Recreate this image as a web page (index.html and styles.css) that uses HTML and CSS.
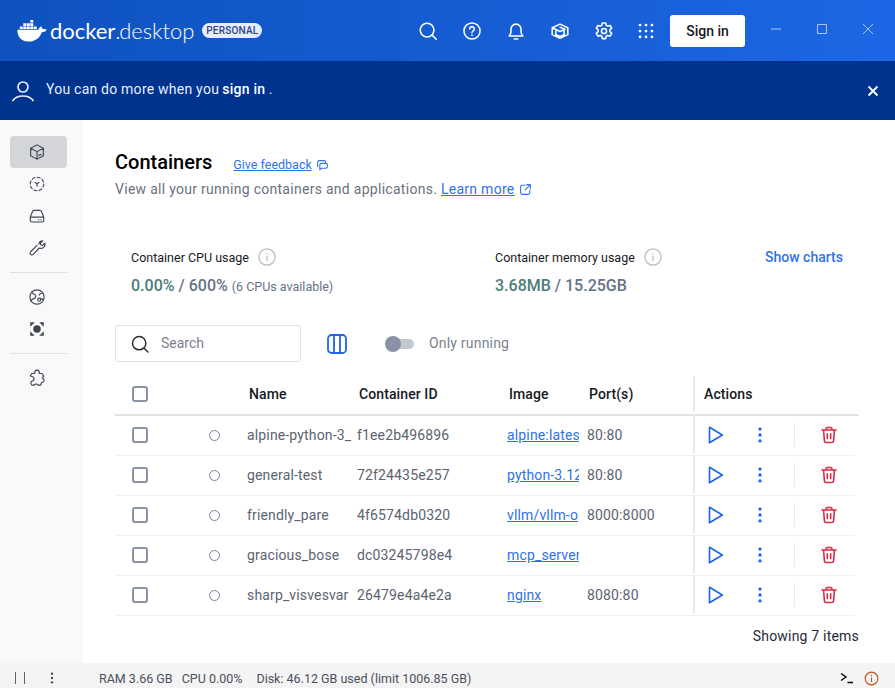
FILE: index.html
```html
<!DOCTYPE html>
<html lang="en">

<head>
    <meta charset="UTF-8">
    <meta name="viewport" content="width=device-width, initial-scale=1.0">
    <title>Docker Desktop</title>
    <link rel="stylesheet" href="styles.css">
</head>

<body>
    <svg class="defs" width="0" height="0">
        <symbol id="play" viewBox="0 0 24 24"><path d="M6 3.500 20 12 6 20.500Z" fill="none" stroke="currentColor" stroke-width="1.800" stroke-linejoin="round"/></symbol>
        <symbol id="dots" viewBox="0 0 24 24"><circle cx="12" cy="5.500" r="1.800" fill="currentColor"/><circle cx="12" cy="12" r="1.800" fill="currentColor"/><circle cx="12" cy="18.500" r="1.800" fill="currentColor"/></symbol>
        <symbol id="trash" viewBox="0 0 24 24"><path d="M3.500 6h17M8.500 6V4.500q0-1.500 1.500-1.500h4q1.500 0 1.500 1.500V6M5.500 6l1 13q.2 2 2 2h7q1.800 0 2-2l1-13M10 10.500v6M14 10.500v6" fill="none" stroke="currentColor" stroke-width="1.900" stroke-linecap="round"/></symbol>
    </svg>

    <header class="topbar">
        <div class="brand">
            <svg class="whale" viewBox="0 0 30 24" width="30" height="24">
                <path d="M.4 11.800h21.200c.3-1.500 1.200-2.800 2.300-3.500 1 .8 1.600 1.900 1.700 3 1.300-.5 2.900-.4 4 .4-1 1.800-3 2.500-4.800 2.500C23 19.800 18.400 23.500 11 23.500 3.800 23.500.4 18.500.4 11.800Z" fill="#fff"/>
                <path d="M2.800 8.600h3v2.500h-3ZM6.300 8.600h3v2.500h-3ZM9.800 8.600h3v2.500h-3ZM13.300 8.600h3v2.500h-3ZM16.800 8.600h3v2.500h-3ZM6.300 5.300h3v2.600h-3ZM9.800 5.300h3v2.600h-3ZM13.300 5.300h3v2.600h-3ZM13.300 2h3v2.600h-3Z" fill="#fff"/>
            </svg>
            <span class="wordmark"><b>docker</b><i>.</i>desktop</span>
            <span class="plan">PERSONAL</span>
        </div>
        <div class="tools">
            <svg viewBox="0 0 24 24" width="22" height="22"><circle cx="11" cy="11" r="7.500"/><path d="m16.500 16.500 4.500 4.500"/></svg>
            <svg viewBox="0 0 24 24" width="22" height="22"><circle cx="12" cy="12" r="8.800"/><path d="M9.500 9.800a2.500 2.500 0 1 1 3.800 2.100c-.9.600-1.300 1-1.300 2"/><path d="M12 16.500v.5"/></svg>
            <svg viewBox="0 0 24 24" width="22" height="22"><path d="M4.500 17.500c1.500-1.500 2-2.700 2-5V10a5.500 5.500 0 0 1 11 0v2.500c0 2.300.5 3.500 2 5ZM10 20.800h4"/></svg>
            <svg viewBox="0 0 24 24" width="22" height="22"><path d="m3.500 8.500 8.500-4 8.500 4v7.500L12 20l-8.500-4ZM3.500 8.500l8.500 4 5.500-2.500-5.500-2M7.500 12v4l4.500 2 4.500-2v-4"/></svg>
            <svg viewBox="0 0 24 24" width="22" height="22"><circle cx="12" cy="12" r="2.800"/><path d="m10.200 3.200h3.600l.6 2.600 1.600.9 2.600-.8 1.800 3.100-2 1.800v1.900l2 1.800-1.800 3.100-2.600-.8-1.600.9-.6 2.600h-3.600l-.6-2.600-1.600-.9-2.600.8-1.800-3.100 2-1.800v-1.900l-2-1.800 1.800-3.100 2.600.8 1.600-.9Z"/></svg>
            <svg class="grid-icon" viewBox="0 0 24 24" width="22" height="22"><circle cx="5.500" cy="5.500" r="1.500"/><circle cx="12" cy="5.500" r="1.500"/><circle cx="18.500" cy="5.500" r="1.500"/><circle cx="5.500" cy="12" r="1.500"/><circle cx="12" cy="12" r="1.500"/><circle cx="18.500" cy="12" r="1.500"/><circle cx="5.500" cy="18.500" r="1.500"/><circle cx="12" cy="18.500" r="1.500"/><circle cx="18.500" cy="18.500" r="1.500"/></svg>
        </div>
        <button class="signin">Sign in</button>
        <div class="window">
            <svg viewBox="0 0 12 12" width="12" height="12"><path d="M1 6h10"/></svg>
            <svg viewBox="0 0 12 12" width="12" height="12"><path d="M1.500 1.500h9v9h-9Z"/></svg>
            <svg viewBox="0 0 12 12" width="12" height="12"><path d="m1 1 10 10M11 1 1 11"/></svg>
        </div>
    </header>

    <div class="banner">
        <svg viewBox="0 0 24 24" width="24" height="24"><circle cx="12" cy="8" r="5"/><path d="M1.500 22c2.500-3.700 6-5 10.500-5s8 1.300 10.500 5"/></svg>
        <p>You can do more when you<b>sign in</b> .</p>
        <svg class="banner-close" viewBox="0 0 12 12" width="12" height="12"><path d="m1.500 1.500 9 9M10.500 1.500l-9 9"/></svg>
    </div>

    <div class="middle">
        <nav class="sidebar">
            <a class="active"><svg viewBox="0 0 24 24" width="18" height="18"><path d="m12 2.500 8.500 4.500v10L12 21.500 3.500 17V7ZM3.500 7l8.500 4.500L20.500 7M12 11.500v10M14.500 16.500l3-1.500"/></svg></a>
            <a><svg viewBox="0 0 24 24" width="18" height="18"><circle cx="12" cy="12" r="9" stroke-dasharray="4 3.070"/><path d="m9.500 10 2.500 1.500 2.500-1.500M12 11.500V15"/></svg></a>
            <a><svg viewBox="0 0 24 24" width="18" height="18"><path d="M3 13.500 6 6q.5-1.500 2-1.500h8q1.500 0 2 1.500l3 7.500v4q0 2.500-2.500 2.500h-13Q3 20 3 17.500ZM3 13.500h18M14 17h.5M17 17h.5"/></svg></a>
            <a><svg viewBox="0 0 24 24" width="18" height="18"><path d="M14.500 7a5 5 0 0 1 5-4.500l-3 3 .5 2.500 2.500.5 3-3a5.500 5.500 0 0 1-7.500 6.500L7 20.500q-2 1.500-3.500 0t0-3.500l8.500-8.500"/></svg></a>
            <hr>
            <a><svg viewBox="0 0 24 24" width="18" height="18"><circle cx="12" cy="12" r="9.500"/><path d="M5 5.500c1 3 3.500 2.500 5 4s-.5 4-3 5-3 2-3 3M20 7c-2 0-4.500.5-5 2.500M20.500 16 18 14"/><circle cx="15" cy="15.500" r="2"/></svg></a>
            <a><svg viewBox="0 0 24 24" width="18" height="18"><circle class="solid" cx="12" cy="12" r="5"/><path class="solid" d="M3 3h6L3 9ZM21 3v6l-6-6ZM3 21v-6l6 6ZM21 21h-6l6-6Z"/></svg></a>
            <hr>
            <a><svg viewBox="0 0 24 24" width="18" height="18"><path d="M9 6V4.500a3 3 0 0 1 6 0V6h3.500L21 9.500 19 12l2 1.500a3 3 0 0 1-3 4.500l-1 3.500h-3.500a2.800 2.800 0 0 0-5 0H5l-1.500-3.500L5 16a3 3 0 0 0 0-6L3 9l2-3Z"/></svg></a>
        </nav>

        <main class="content">
            <div class="heading">
                <h1>Containers</h1>
                <a href="#" class="feedback">Give feedback</a>
                <svg class="blue-icon" viewBox="0 0 24 24" width="13" height="13"><path d="M3 14V6q0-3 3-3h9q3 0 3 3v1M7 20l3-3h8q3 0 3-3v-3q0-3-3-3h-8q-3 0-3 3v9Z"/></svg>
            </div>
            <p class="intro">View all your running containers and applications. <a href="#">Learn more</a>
                <svg class="blue-icon" viewBox="0 0 24 24" width="13" height="13"><path d="M11 4H6Q3 4 3 7v11q0 3 3 3h11q3 0 3-3v-5M14 3h7v7M21 3 11 13"/></svg>
            </p>

            <section class="stats">
                <div class="stat stat-cpu">
                    <div class="stat-label">Container CPU usage
                        <svg class="info" viewBox="0 0 20 20" width="18" height="18"><circle cx="10" cy="10" r="9"/><path d="M10 9v5M10 5.800v.5"/></svg>
                    </div>
                    <div class="stat-value"><em>0.00%</em> / 600% <small>(6 CPUs available)</small></div>
                </div>
                <div class="stat stat-mem">
                    <div class="stat-label">Container memory usage
                        <svg class="info" viewBox="0 0 20 20" width="18" height="18"><circle cx="10" cy="10" r="9"/><path d="M10 9v5M10 5.800v.5"/></svg>
                    </div>
                    <div class="stat-value"><em>3.68MB</em> / 15.25GB</div>
                </div>
                <a href="#" class="charts">Show charts</a>
            </section>

            <div class="filters">
                <label class="search">
                    <svg viewBox="0 0 24 24" width="20" height="20"><circle cx="11" cy="11" r="8"/><path d="m17 17 4.500 4.500"/></svg>
                    <span>Search</span>
                </label>
                <svg class="columns" viewBox="0 0 20 20" width="20" height="20"><rect x="1" y="1" width="18" height="18" rx="3.500"/><path d="M7 1v18M13 1v18"/></svg>
                <span class="switch"><i></i></span>
                <span class="switch-label">Only running</span>
            </div>

            <div class="table">
                <div class="row head">
                    <div class="cell-check"><span class="box"></span></div>
                    <div></div>
                    <div class="th">Name</div>
                    <div class="th">Container ID</div>
                    <div class="th">Image</div>
                    <div class="th">Port(s)</div>
                    <div class="cell-actions th">Actions</div>
                </div>
                <div class="row">
                    <div class="cell-check"><span class="box"></span></div>
                    <div class="cell-status"><span class="dot"></span></div>
                    <div class="clip">alpine-python-3_</div>
                    <div>f1ee2b496896</div>
                    <div class="clip"><a href="#">alpine:lates</a></div>
                    <div>80:80</div>
                    <div class="cell-actions">
                        <svg class="play"><use href="#play"/></svg>
                        <svg class="more"><use href="#dots"/></svg>
                        <span class="sep"></span>
                        <svg class="trash"><use href="#trash"/></svg>
                    </div>
                </div>
                <div class="row">
                    <div class="cell-check"><span class="box"></span></div>
                    <div class="cell-status"><span class="dot"></span></div>
                    <div class="clip">general-test</div>
                    <div>72f24435e257</div>
                    <div class="clip"><a href="#">python-3.12</a></div>
                    <div>80:80</div>
                    <div class="cell-actions">
                        <svg class="play"><use href="#play"/></svg>
                        <svg class="more"><use href="#dots"/></svg>
                        <span class="sep"></span>
                        <svg class="trash"><use href="#trash"/></svg>
                    </div>
                </div>
                <div class="row">
                    <div class="cell-check"><span class="box"></span></div>
                    <div class="cell-status"><span class="dot"></span></div>
                    <div class="clip">friendly_pare</div>
                    <div>4f6574db0320</div>
                    <div class="clip"><a href="#">vllm/vllm-o</a></div>
                    <div>8000:8000</div>
                    <div class="cell-actions">
                        <svg class="play"><use href="#play"/></svg>
                        <svg class="more"><use href="#dots"/></svg>
                        <span class="sep"></span>
                        <svg class="trash"><use href="#trash"/></svg>
                    </div>
                </div>
                <div class="row">
                    <div class="cell-check"><span class="box"></span></div>
                    <div class="cell-status"><span class="dot"></span></div>
                    <div class="clip">gracious_bose</div>
                    <div>dc03245798e4</div>
                    <div class="clip"><a href="#">mcp_server</a></div>
                    <div></div>
                    <div class="cell-actions">
                        <svg class="play"><use href="#play"/></svg>
                        <svg class="more"><use href="#dots"/></svg>
                        <span class="sep"></span>
                        <svg class="trash"><use href="#trash"/></svg>
                    </div>
                </div>
                <div class="row">
                    <div class="cell-check"><span class="box"></span></div>
                    <div class="cell-status"><span class="dot"></span></div>
                    <div class="clip">sharp_visvesvar</div>
                    <div>26479e4a4e2a</div>
                    <div class="clip"><a href="#">nginx</a></div>
                    <div>8080:80</div>
                    <div class="cell-actions">
                        <svg class="play"><use href="#play"/></svg>
                        <svg class="more"><use href="#dots"/></svg>
                        <span class="sep"></span>
                        <svg class="trash"><use href="#trash"/></svg>
                    </div>
                </div>
            </div>
            <div class="count">Showing 7 items</div>
        </main>
    </div>

    <footer class="status">
        <span class="pause"></span>
        <svg class="status-more" viewBox="0 0 24 24" width="16" height="16"><use href="#dots"/></svg>
        <span class="ram">RAM 3.66 GB</span>
        <span class="cpu">CPU 0.00%</span>
        <span class="disk">Disk: 46.12 GB used (limit 1006.85 GB)</span>
        <svg class="term" viewBox="0 0 14 12" width="14" height="12"><path d="m1 1.500 5 3.500-5 3.500M7.500 10.500H13"/></svg>
        <svg class="alert" viewBox="0 0 20 20" width="15" height="15"><circle cx="10" cy="10" r="8.500"/><path d="M10 9v5M10 5.800v.5"/></svg>
    </footer>
</body>

</html>
```

FILE: styles.css
```css
* {
    box-sizing: border-box;
}
html, body {
    height: 100%;
}
body {
    margin: 0;
    display: flex;
    flex-direction: column;
    height: 688px;
    overflow: hidden;
    font-family: Roboto, sans-serif;
    color: #17191e;
    background: #fff;
}
a {
    color: #2f73e8;
}
.defs {
    position: absolute;
}

/*--------------------------*/
.topbar {
    height: 61px;
    flex: none;
    display: flex;
    align-items: center;
    padding-left: 17px;
    background: linear-gradient(to right, #0e52bf, #1d66e5);
    color: #fff;
}
.brand {
    display: flex;
    align-items: center;
    width: 400px;
}
.whale {
    margin-top: -2px;
}
.wordmark {
    margin-left: 3px;
    font-family: Lato, sans-serif;
    font-size: 22px;
    font-weight: 300;
    line-height: 1;
    letter-spacing: -.05px;
}
.wordmark b {
    font-weight: 400;
}
.wordmark i {
    font-style: normal;
    margin-right: -1px;
}
.plan {
    margin-left: 8px;
    padding: 0 4px;
    height: 15px;
    line-height: 15px;
    border-radius: 8px;
    background: #e5eefa;
    color: #2d3f9c;
    font-size: 10px;
    font-weight: 500;
    letter-spacing: .2px;
}
.tools {
    display: flex;
    gap: 22px;
    width: 253px;
}
.tools svg {
    fill: none;
    stroke: #fff;
    stroke-width: 1.700;
    stroke-linecap: round;
    stroke-linejoin: round;
}
.tools .grid-icon {
    margin-left: -2px;
    fill: #fff;
    stroke: none;
}
.signin {
    width: 75px;
    height: 32px;
    padding: 0;
    border: 0;
    border-radius: 3px;
    background: #fff;
    color: #17191e;
    font: 500 14px Roboto, sans-serif;
}
.window {
    display: flex;
    gap: 34px;
    margin-left: 25px;
    margin-top: -4px;
}
.window svg {
    fill: none;
    stroke: #a9c6f5;
    stroke-width: 1;
}

/*--------------------------*/
.banner {
    height: 59px;
    flex: none;
    display: flex;
    align-items: center;
    padding: 0 16px 0 11px;
    background: #00338d;
    color: #e8f0fc;
}
.banner svg {
    fill: none;
    stroke: #e8f0fc;
    stroke-width: 1.700;
}
.banner p {
    margin: 0 0 3px 11px;
    font-size: 14px;
    letter-spacing: .3px;
    word-spacing: -.3px;
}
.banner b {
    margin-left: 3px;
    font-weight: 500;
    color: #fff;
}
.banner .banner-close {
    margin-left: auto;
    stroke: #fff;
    stroke-width: 1.800;
}

/*--------------------------*/
.middle {
    flex: 1;
    display: flex;
    min-height: 0;
}
.sidebar {
    width: 83px;
    flex: none;
    padding: 16px 16px 0 10px;
    background: #f9f9fa;
}
.sidebar a {
    display: flex;
    align-items: center;
    justify-content: center;
    height: 32px;
    padding-right: 3px;
    border-radius: 4px;
}
.sidebar a.active {
    background: #d3d5d8;
}
.sidebar svg {
    fill: none;
    stroke: #3d4450;
    stroke-width: 1.500;
    stroke-linejoin: round;
    stroke-linecap: round;
}
.sidebar svg .solid {
    fill: #3d4450;
    stroke: none;
}
.sidebar hr {
    height: 1px;
    margin: 8px 0;
    border: 0;
    background: #dfe1e4;
}

/*--------------------------*/
.content {
    flex: 1;
    min-width: 0;
    padding: 30px 36px 0 32px;
}
.heading {
    display: flex;
    align-items: center;
    height: 24px;
}
h1 {
    margin: 0 21px 0 0;
    font-size: 20px;
    font-weight: 500;
    color: #000;
}
.feedback {
    margin-top: 5px;
    font-size: 12.500px;
}
.blue-icon {
    fill: none;
    stroke: #2f73e8;
    stroke-width: 2;
    stroke-linecap: round;
    stroke-linejoin: round;
}
.heading .blue-icon {
    margin: 6px 0 0 4px;
}
.intro {
    margin: 5px 0 0;
    height: 20px;
    line-height: 20px;
    font-size: 14px;
    letter-spacing: .28px;
    color: #6b7280;
}
.intro .blue-icon {
    margin-left: 1px;
    vertical-align: -2px;
}

.stats {
    display: flex;
    align-items: flex-start;
    height: 48px;
    margin-top: 48px;
    padding-left: 16px;
}
.stat-cpu {
    width: 364px;
}
.stat-mem {
    width: 270px;
}
.stat-label {
    display: flex;
    align-items: center;
    gap: 9px;
    height: 20px;
    font-size: 12.500px;
}
.info {
    fill: none;
    stroke: #b5b8bd;
    stroke-width: 1.300;
    stroke-linecap: round;
}
.stat-value {
    margin-top: 9px;
    font-size: 16px;
    font-weight: 500;
    color: #677285;
}
.stat-value em {
    font-style: normal;
    color: #4c7d78;
}
.stat-value small {
    font-size: 12.500px;
    font-weight: 400;
}
.charts {
    font-size: 14px;
    font-weight: 500;
    text-decoration: none;
    height: 20px;
    line-height: 20px;
}

.filters {
    display: flex;
    align-items: center;
    height: 37px;
    margin-top: 30px;
}
.search {
    display: flex;
    align-items: center;
    width: 186px;
    height: 37px;
    padding-left: 14px;
    border: 1px solid #dfe1e4;
    border-radius: 3px;
    font-size: 14px;
    color: #7b8290;
}
.search svg {
    fill: none;
    stroke: #2a2f38;
    stroke-width: 1.800;
    stroke-linecap: round;
}
.search span {
    margin: 0 0 2px 11px;
}
.columns {
    margin-left: 26px;
    fill: none;
    stroke: #1d66e5;
    stroke-width: 1.800;
}
.switch {
    position: relative;
    width: 28px;
    height: 10px;
    margin-left: 39px;
    border-radius: 5px;
    background: #c3c7cf;
}
.switch i {
    position: absolute;
    left: -1px;
    top: -3px;
    width: 16px;
    height: 16px;
    border-radius: 50%;
    background: #8a92a3;
}
.switch-label {
    margin: 0 0 2px 15px;
    font-size: 14px;
    letter-spacing: .2px;
    color: #7b8290;
}

/*--------------------------*/
.table {
    margin-top: 14px;
}
.row {
    display: grid;
    grid-template-columns: 72px 60px 110px 150px 80px 106px 166px;
    align-items: center;
    height: 40px;
    width: 740px;
    padding-bottom: 1px;
    border-bottom: 1px solid #f0f1f2;
    font-size: 14px;
    letter-spacing: .15px;
    color: #5c6370;
}
.row > div {
    height: 100%;
    display: flex;
    align-items: center;
    min-width: 0;
}
.row.head {
    width: 744px;
    padding-bottom: 2px;
    border-bottom: 2px solid #e3e4e6;
    color: #17191e;
}
.th {
    padding-left: 2px;
    font-size: 14px;
    font-weight: 500;
    letter-spacing: .1px;
}
.clip {
    overflow: hidden;
    white-space: nowrap;
}
.row > .clip:nth-child(5) {
    width: 72px;
}
.row > .clip:nth-child(3) {
    width: 106px;
}
.cell-check {
    padding-left: 17px;
}
.box {
    width: 16px;
    height: 16px;
    border: 2px solid #8a92a3;
    border-radius: 3px;
}
.cell-status {
    justify-content: center;
    padding-right: 6px;
}
.dot {
    width: 11px;
    height: 11px;
    border: 1.500px solid #7b8290;
    border-radius: 50%;
}
.row > .cell-actions {
    padding-left: 9px;
    border-left: 2px solid #e9eaec;
}
.play {
    width: 22px;
    height: 22px;
    color: #1d66e5;
}
.more {
    width: 22px;
    height: 22px;
    margin-left: 23px;
    color: #1d66e5;
}
.sep {
    width: 1px;
    height: 24px;
    margin-left: 23px;
    background: #e8e9eb;
}
.trash {
    width: 20px;
    height: 20px;
    margin-left: 24px;
    color: #d92b47;
}
.count {
    margin-top: 12px;
    text-align: right;
    font-size: 14px;
    letter-spacing: .2px;
    color: #1f2a3a;
}

/*--------------------------*/
.status {
    height: 25px;
    flex: none;
    display: flex;
    align-items: center;
    padding: 5px 16px 0 15px;
    background: #f4f4f5;
    font-size: 12.500px;
    color: #4a505c;
}
.pause {
    width: 10px;
    height: 12px;
    border-left: 1px solid #5c6370;
    border-right: 1px solid #5c6370;
}
.status-more {
    margin-left: 19px;
    color: #4a505c;
}
.ram {
    margin-left: 39px;
}
.cpu {
    margin-left: 9px;
}
.disk {
    margin-left: 14px;
}
.term {
    margin-left: auto;
    fill: none;
    stroke: #000;
    stroke-width: 1.400;
}
.alert {
    margin-left: 10px;
    fill: none;
    stroke: #c2501f;
    stroke-width: 1.500;
    stroke-linecap: round;
}
```
